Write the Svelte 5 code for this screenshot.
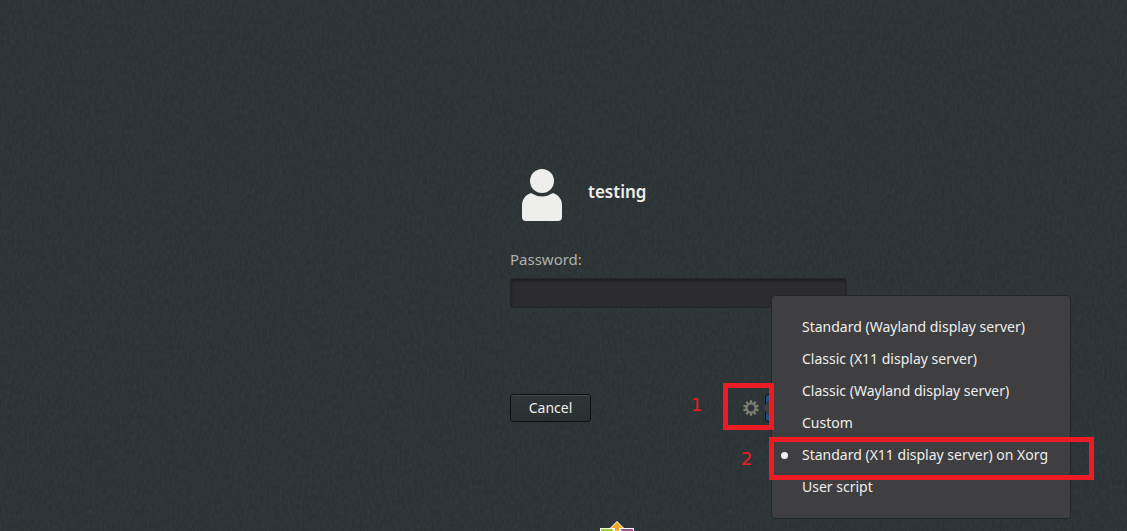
<script>
  let password = $state('');
  let selected = $state('Standard (X11 display server) on Xorg');
  const sessions = [
    'Standard (Wayland display server)',
    'Classic (X11 display server)',
    'Classic (Wayland display server)',
    'Custom',
    'Standard (X11 display server) on Xorg',
    'User script'
  ];
  const teeth = [0, 36, 72, 108, 144, 180, 216, 252, 288, 324];
</script>

<main>
  <svg class="texture" aria-hidden="true">
    <filter id="grain" x="0" y="0" width="100%" height="100%" color-interpolation-filters="sRGB">
      <feTurbulence type="fractalNoise" baseFrequency="0.4 0.2" numOctaves="2" seed="4" />
      <feColorMatrix values="0 0 0 0 0.26  0 0 0 0 0.28  0 0 0 0 0.3  0.6 0 0 0 -0.2" />
    </filter>
    <rect width="100%" height="100%" filter="url(#grain)" />
  </svg>

  <form class="login" onsubmit={(e) => e.preventDefault()}>
    <div class="user">
      <svg class="avatar" viewBox="0 0 42 54" aria-hidden="true">
        <circle cx="21" cy="13" r="12" />
        <path d="M10 25C4 27 1 32 1 37v12q0 4 4 4h32q4 0 4-4V37c0-5-3-10-9-12q-11 7-22 0z" />
      </svg>
      <h1>testing</h1>
    </div>
    <label for="password">Password:</label>
    <input id="password" type="password" bind:value={password} />
    <div class="actions">
      <button class="cancel" type="button">Cancel</button>
      <div class="session">
        <span class="step one">1</span>
        <span class="step two">2</span>
        <button class="gear" type="button" aria-label="Session">
          <svg viewBox="0 0 16 16" aria-hidden="true">
            <circle cx="8" cy="8" r="4.6" fill="none" stroke="currentColor" stroke-width="2.4" />
            {#each teeth as angle}
              <rect x="6.9" y="0.2" width="2.2" height="3" transform="rotate({angle} 8 8)" fill="currentColor" />
            {/each}
          </svg>
        </button>
        <span class="signin"></span>
        <div class="menu" role="menu">
          {#each sessions as name}
            <button
              type="button"
              role="menuitemradio"
              aria-checked={selected === name}
              onclick={() => (selected = name)}>{name}</button>
          {/each}
          <span class="mark choice"></span>
        </div>
        <svg class="pointer" viewBox="0 0 10 22" aria-hidden="true">
          <path d="M10 1L0 11l10 10z" fill="#3f3f41" />
          <path d="M10 1L0 11l10 10" fill="none" stroke="#242727" stroke-width="0.6" />
        </svg>
        <span class="mark trigger"></span>
      </div>
    </div>
  </form>

  <svg class="logo" viewBox="0 0 34 10" aria-hidden="true">
    <path d="M0 7h34v3H0z" fill="#fff" />
    <path d="M1 8h13l-2 2H1z" fill="#9ccd2a" />
    <path d="M20 8h13v2H22z" fill="#a14f8c" />
    <path d="M17 0l8 8H9z" fill="#fff" />
    <path d="M17 1l6 6h-4v3h-4V7h-4z" fill="#efa724" />
  </svg>
</main>

<style>
  :global(body) {
    margin: 0;
    background: #2e3436;
  }
  main {
    position: relative;
    box-sizing: border-box;
    min-height: 100vh;
    padding: 168px 24px 0;
    overflow: hidden;
    background: #2c3335;
    color: #eeeeec;
    font: 14px/20px "Noto Sans", sans-serif;
  }
  .texture {
    position: absolute;
    inset: 0;
    width: 100%;
    height: 100%;
  }
  .login {
    position: relative;
    width: 337px;
    margin: 0 auto;
    left: 115px;
  }
  .user {
    display: flex;
    gap: 25px;
    padding-left: 11px;
  }
  .avatar {
    width: 42px;
    height: 54px;
    fill: #eeeeec;
  }
  h1 {
    margin: 12px 0 0;
    font-size: 17px;
    line-height: 24px;
    font-weight: 600;
  }
  label {
    display: block;
    margin: 25px 0 7px;
    color: #b0b1a9;
    font-size: 15px;
    line-height: 24px;
  }
  input {
    display: block;
    box-sizing: border-box;
    width: 100%;
    height: 30px;
    padding: 0 8px;
    border: 1px solid #222627;
    border-radius: 3px;
    outline: none;
    background: #2c2c2e;
    box-shadow: inset 0 2px 3px #1d1e1f;
    color: inherit;
    font: inherit;
  }
  button {
    color: inherit;
    font: inherit;
    cursor: pointer;
  }
  .actions {
    display: flex;
    justify-content: space-between;
    padding-top: 86px;
  }
  .cancel {
    width: 81px;
    height: 28px;
    padding: 0;
    border: 1px solid #0e1112;
    border-radius: 3px;
    background: linear-gradient(#2f3638, #2a3032);
    box-shadow: inset 0 1px #42494b;
  }
  .session {
    position: relative;
    display: flex;
    width: 106px;
    height: 28px;
  }
  .gear {
    width: 20px;
    height: 28px;
    padding: 6px 2px;
    border: 0;
    background: none;
    color: #7d7e70;
  }
  .gear svg {
    display: block;
    width: 16px;
    height: 16px;
  }
  .signin {
    flex: 1;
    margin-left: 4px;
    border: 1px solid #0d1013;
    border-radius: 3px;
    background: #215088;
  }
  .menu {
    position: absolute;
    left: 30px;
    top: -99px;
    box-sizing: border-box;
    width: 300px;
    padding: 15px 0;
    border: 1px solid #242727;
    border-radius: 4px;
    background: #3f3f41;
  }
  .menu button {
    position: relative;
    display: block;
    width: 100%;
    height: 32px;
    padding: 0 0 0 30px;
    border: 0;
    background: none;
    text-align: left;
    white-space: nowrap;
  }
  .menu button[aria-checked="true"]::before {
    content: "";
    position: absolute;
    left: 9px;
    top: 13px;
    width: 7px;
    height: 7px;
    border-radius: 50%;
    background: #eeeeec;
  }
  .pointer {
    position: absolute;
    left: 21px;
    top: 3px;
    width: 10px;
    height: 22px;
  }
  .mark {
    position: absolute;
    box-sizing: border-box;
    border: 5px solid #ed1c24;
    pointer-events: none;
  }
  .trigger {
    left: -18px;
    top: -11px;
    width: 51px;
    height: 47px;
  }
  .choice {
    left: -3px;
    top: 141px;
    width: 325px;
    height: 43px;
  }
  .step {
    position: absolute;
    color: #ed1c24;
    font: 18px/24px "DejaVu Sans", sans-serif;
  }
  .one {
    left: -50px;
    top: -1px;
  }
  .two {
    left: 0;
    top: 53px;
  }
  .logo {
    position: absolute;
    left: calc(50% + 36px);
    bottom: 0;
    width: 34px;
    height: 10px;
  }
</style>
